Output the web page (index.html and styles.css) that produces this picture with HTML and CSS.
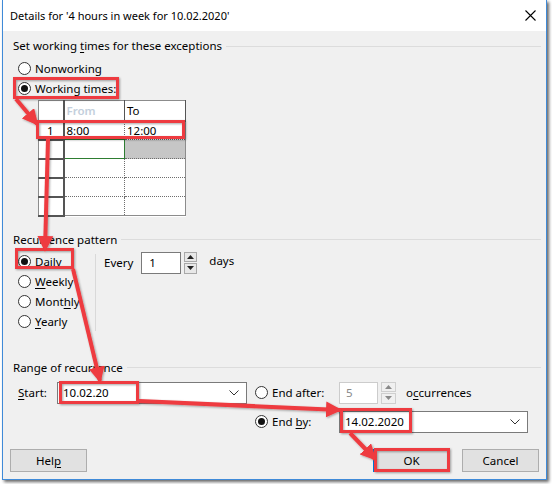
FILE: index.html
```html
<!DOCTYPE html>
<html lang="en">
<head>
    <meta charset="UTF-8">
    <title>Details for '4 hours in week for 10.02.2020'</title>
    <link rel="stylesheet" href="styles.css">
</head>
<body>
    <div class="window">
        <div class="titlebar">
            <span>Details for '4 hours in week for 10.02.2020'</span>
            <svg class="close" width="11" height="11" viewBox="0 0 11 11">
                <path d="M0.5 0.5 L10.5 10.5 M10.5 0.5 L0.5 10.5" stroke="#000" stroke-width="1.1"/>
            </svg>
        </div>

        <div class="content">
            <div class="group-title"><span>Set working <u>t</u>imes for these exceptions</span></div>
            <div class="options">
                <label class="radio"><span class="dot"></span><span>Nonworking</span></label>
                <label class="radio"><span class="dot checked"></span><span>Working times:</span></label>
            </div>

            <table class="times">
                <colgroup>
                    <col class="col-num">
                    <col class="col-time">
                    <col class="col-time">
                </colgroup>
                <tr>
                    <th class="num"></th>
                    <th class="muted">From</th>
                    <th>To</th>
                </tr>
                <tr>
                    <td class="num">1</td>
                    <td>8:00</td>
                    <td>12:00</td>
                </tr>
                <tr>
                    <td class="num"></td>
                    <td class="active"></td>
                    <td class="selected"></td>
                </tr>
                <tr>
                    <td class="num"></td>
                    <td></td>
                    <td></td>
                </tr>
                <tr>
                    <td class="num"></td>
                    <td></td>
                    <td></td>
                </tr>
                <tr>
                    <td class="num"></td>
                    <td></td>
                    <td></td>
                </tr>
            </table>

            <div class="group-title pattern-title"><span>Recurrence pattern</span></div>
            <div class="pattern">
                <div class="pattern-radios">
                    <label class="radio"><span class="dot checked"></span><span>Daily</span></label>
                    <label class="radio"><span class="dot"></span><span><u>W</u>eekly</span></label>
                    <label class="radio"><span class="dot"></span><span>Mont<u>h</u>ly</span></label>
                    <label class="radio"><span class="dot"></span><span><u>Y</u>early</span></label>
                </div>
                <div class="vsep"></div>
                <div class="every">
                    <span>Every</span>
                    <span class="field every-field">1</span>
                    <span class="spin">
                        <span class="spin-btn"><svg width="7" height="4" viewBox="0 0 7 4"><path d="M0 4 L3.5 0 L7 4 z" fill="#222"/></svg></span>
                        <span class="spin-btn"><svg width="7" height="4" viewBox="0 0 7 4"><path d="M0 0 L3.5 4 L7 0 z" fill="#222"/></svg></span>
                    </span>
                    <span class="days">days</span>
                </div>
            </div>

            <div class="group-title range-title"><span>Range of recurrence</span></div>
            <div class="range-row first">
                <span class="range-label"><u>S</u>tart:</span>
                <span class="combo start-combo">
                    <span>10.02.20</span>
                    <svg width="10" height="6" viewBox="0 0 10 6"><path d="M0.5 0.5 L5 5 L9.5 0.5" stroke="#333" fill="none"/></svg>
                </span>
                <label class="radio end-opt"><span class="dot"></span><span>End after:</span></label>
                <span class="field disabled-field">5</span>
                <span class="spin small">
                    <span class="spin-btn off"><svg width="7" height="4" viewBox="0 0 7 4"><path d="M0 4 L3.5 0 L7 4 z" fill="#8a8a8a"/></svg></span>
                    <span class="spin-btn off"><svg width="7" height="4" viewBox="0 0 7 4"><path d="M0 0 L3.5 4 L7 0 z" fill="#8a8a8a"/></svg></span>
                </span>
                <span class="occ">o<u>c</u>currences</span>
            </div>
            <div class="range-row">
                <span class="spacer"></span>
                <label class="radio end-opt"><span class="dot checked"></span><span>End <u>b</u>y:</span></label>
                <span class="combo end-combo">
                    <span>14.02.2020</span>
                    <svg width="10" height="6" viewBox="0 0 10 6"><path d="M0.5 0.5 L5 5 L9.5 0.5" stroke="#333" fill="none"/></svg>
                </span>
            </div>

            <div class="buttons">
                <button type="button">Hel<u>p</u></button>
                <div class="button-group">
                    <button type="button" class="default">OK</button>
                    <button type="button">Cancel</button>
                </div>
            </div>
        </div>
    </div>

    <!-- annotation marks drawn over the dialog -->
    <svg class="marks" width="552" height="484" viewBox="0 0 552 484">
        <defs>
            <filter id="shade" x="-10%" y="-10%" width="130%" height="130%">
                <feDropShadow dx="1" dy="1" stdDeviation="0.8" flood-color="#000" flood-opacity="0.35"/>
            </filter>
            <marker id="head" viewBox="0 0 16 16" refX="14" refY="8" markerWidth="16" markerHeight="16" orient="auto" markerUnits="userSpaceOnUse">
                <path d="M0 0 L16 8 L0 16 z" fill="#ee3a3f"/>
            </marker>
        </defs>
        <g filter="url(#shade)" fill="none" stroke="#ee3a3f">
            <rect x="14.5" y="78.5" width="103" height="19" stroke-width="3"/>
            <rect x="37.5" y="121.5" width="146" height="16" stroke-width="3"/>
            <rect x="16.5" y="249.5" width="56" height="18" stroke-width="3"/>
            <rect x="60.5" y="382.5" width="77" height="20" stroke-width="3"/>
            <rect x="341.5" y="409.5" width="69" height="22" stroke-width="3"/>
            <rect x="375.5" y="449.5" width="73" height="21" stroke-width="3"/>

            <line x1="16" y1="99" x2="37" y2="124" stroke-width="4" marker-end="url(#head)"/>
            <line x1="48" y1="139" x2="45" y2="250" stroke-width="4" marker-end="url(#head)"/>
            <line x1="73" y1="269" x2="100" y2="381" stroke-width="4" marker-end="url(#head)"/>
            <line x1="139" y1="401" x2="340" y2="410" stroke-width="4" marker-end="url(#head)"/>
            <line x1="350" y1="433" x2="375" y2="459" stroke-width="4" marker-end="url(#head)"/>
        </g>
    </svg>
</body>
</html>
```

FILE: styles.css
```css
* {
    box-sizing: border-box;
}

body {
    margin: 0;
    width: 552px;
    height: 484px;
    position: relative;
    overflow: hidden;
    background-color: #fff;
    font-family: 'Noto Sans', sans-serif;
    font-size: 11.5px;
    color: #000;
}

.window {
    margin-left: 2px;
    width: 545px;
    height: 480px;
    display: flex;
    flex-direction: column;
    background-color: #f0f0f0;
    border: 1px solid #3f8ad8;
    border-top: none;
    box-shadow: 2px 2px 3px rgba(0, 0, 0, 0.6);
}

.titlebar {
    height: 31px;
    flex-shrink: 0;
    display: flex;
    align-items: center;
    justify-content: space-between;
    padding: 0 10px 0 7px;
    background-color: #fff;
    font-size: 11px;
}

.content {
    flex: 1;
    display: flex;
    flex-direction: column;
    padding: 7px 5px 0 10px;
}

u {
    text-decoration-thickness: 1px;
    text-underline-offset: 2px;
}

.group-title {
    display: flex;
    align-items: center;
    height: 16px;
    line-height: 16px;
    white-space: nowrap;
}

.group-title::after {
    content: "";
    flex: 1;
    margin-left: 4px;
    border-top: 1px solid #dcdcdc;
}

.options {
    margin: 4px 0 0 5px;
}

.radio {
    display: flex;
    align-items: center;
    height: 20px;
    white-space: nowrap;
}

.dot {
    width: 13px;
    height: 13px;
    margin-right: 4px;
    flex-shrink: 0;
    border: 1px solid #333;
    border-radius: 50%;
    background-color: #fff;
    position: relative;
}

.dot.checked::after {
    content: "";
    position: absolute;
    left: 2px;
    top: 2px;
    width: 7px;
    height: 7px;
    border-radius: 50%;
    background-color: #111;
}

/* working times grid */
.times {
    margin: 2px 0 0 25px;
    border-collapse: collapse;
    table-layout: fixed;
    width: 147px;
    background-color: #fff;
    border: 1px solid #8c8c8c;
}

.col-num {
    width: 25px;
}

.col-time {
    width: 61px;
}

.times th,
.times td {
    height: 19px;
    padding: 0 2px;
    text-align: left;
    font-weight: normal;
    white-space: nowrap;
    border-right: 1px dotted #6e6e6e;
    border-bottom: 1px dotted #6e6e6e;
}

.times th {
    height: 20px;
    border-right: 1px solid #555;
    border-bottom: 2px solid #555;
}

.times th.muted {
    color: #c3cfdc;
    font-weight: 600;
}

.times .num {
    text-align: right;
    padding-right: 9px;
    border-right: 2px solid #555;
    border-bottom: 2px solid #555;
}

.times td.active {
    border: 1px solid #2e7d32;
}

.times td.selected {
    background-color: #c6c6c6;
}

/* recurrence pattern */
.pattern-title {
    margin-top: 15px;
}

.pattern {
    display: flex;
    margin-top: 4px;
}

.pattern-radios {
    width: 82px;
    padding-left: 5px;
}

.vsep {
    width: 1px;
    height: 77px;
    margin-top: 2px;
    background-color: #d9d9d9;
}

.every {
    display: flex;
    align-items: center;
    height: 22px;
    margin-left: 8px;
}

.field {
    height: 22px;
    display: flex;
    align-items: center;
    background-color: #fff;
    border: 1px solid #7a7a7a;
}

.every-field {
    width: 40px;
    margin-left: 8px;
    padding-left: 7px;
}

.spin {
    width: 13px;
    height: 22px;
    margin-left: 3px;
    display: flex;
    flex-direction: column;
    gap: 1px;
}

.spin-btn {
    flex: 1;
    display: flex;
    align-items: center;
    justify-content: center;
    background-color: #e8e8e8;
    border: 1px solid #a9a9a9;
}

.spin-btn.off {
    background-color: #f0f0f0;
    border-color: #cfcfcf;
}

.days {
    margin-left: 12px;
    margin-top: -4px;
}

/* range of recurrence */
.range-title {
    margin-top: 28px;
}

.range-row {
    display: flex;
    align-items: center;
    height: 22px;
    margin-left: 5px;
}

.range-row.first {
    margin-top: 6px;
    margin-bottom: 7px;
}

.range-label {
    width: 39px;
}

.combo {
    height: 22px;
    display: flex;
    align-items: center;
    justify-content: space-between;
    padding: 0 7px 0 5px;
    background-color: #fff;
    border: 1px solid #7a7a7a;
}

.start-combo {
    width: 190px;
}

.end-combo {
    width: 189px;
}

.end-opt {
    width: 84px;
    margin-left: 8px;
}

.spacer {
    width: 229px;
}

.disabled-field {
    width: 39px;
    padding-left: 6px;
    color: #8a8a8a;
    border-color: #cccccc;
}

.spin.small {
    width: 15px;
}

.occ {
    margin-left: 10px;
}

/* dialog buttons */
.buttons {
    display: flex;
    justify-content: space-between;
    margin: 16px 2px 0 -3px;
}

.button-group {
    display: flex;
    gap: 12px;
}

button {
    width: 77px;
    height: 23px;
    padding: 0;
    font-family: inherit;
    font-size: inherit;
    color: #000;
    background-color: #e1e1e1;
    border: 1px solid #adadad;
}

button.default {
    border-color: #0078d7;
    box-shadow: inset 0 0 0 1px #0078d7;
}

.marks {
    position: absolute;
    left: 0;
    top: 0;
    pointer-events: none;
}
```
